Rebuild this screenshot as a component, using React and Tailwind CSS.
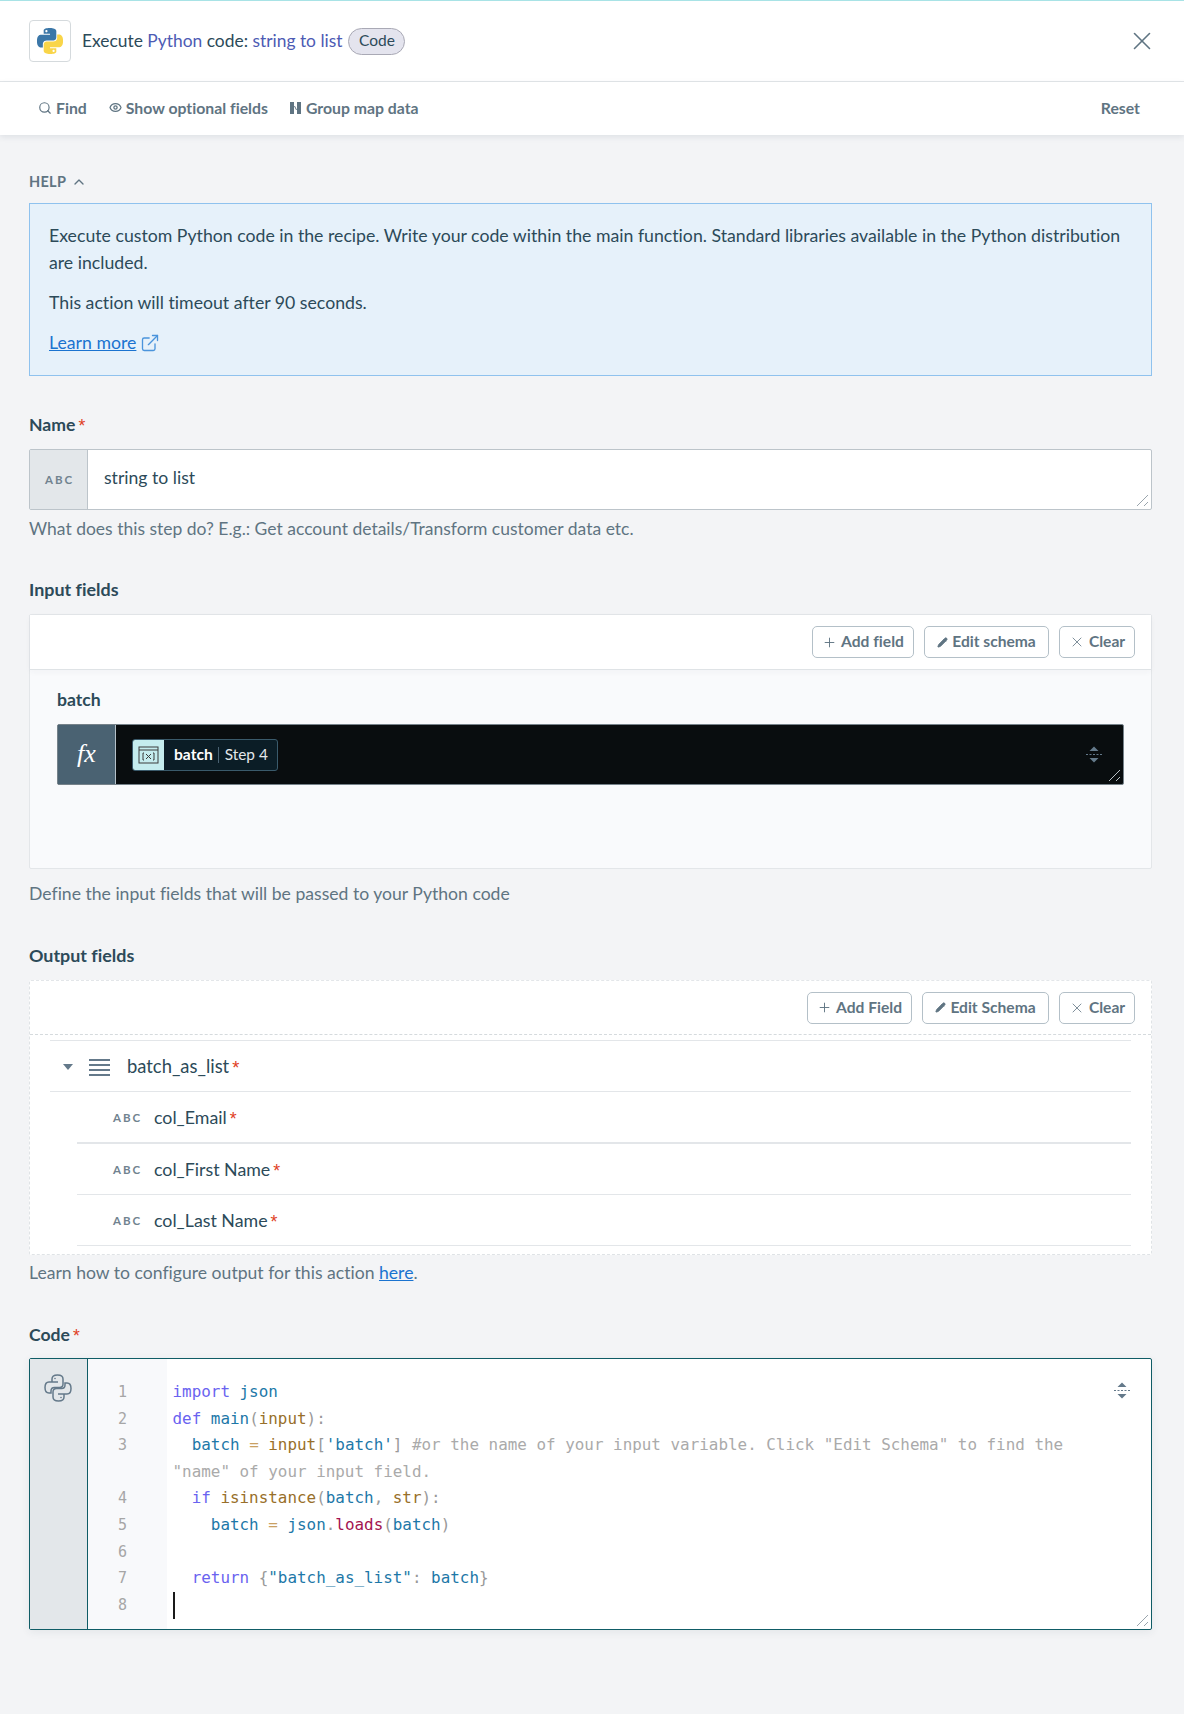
import { Search, Eye, ChevronUp, Plus, X, Pencil, ExternalLink } from 'lucide-react';

const blue = "M14.25.18l.9.2.73.26.59.3.45.32.34.34.25.34.16.33.1.3.04.26.02.2-.01.13V8.5l-.05.63-.13.55-.21.46-.26.38-.3.31-.33.25-.35.19-.35.14-.33.1-.3.07-.26.04-.21.02H8.77l-.69.05-.59.14-.5.22-.41.27-.33.32-.27.35-.2.36-.15.37-.1.35-.07.32-.04.27-.02.21v3.06H3.17l-.21-.03-.28-.07-.32-.12-.35-.18-.36-.26-.36-.36-.35-.46-.32-.59-.28-.73-.21-.88-.14-1.05-.05-1.23.06-1.22.16-1.04.24-.87.32-.71.36-.57.4-.44.42-.33.42-.24.4-.16.36-.1.32-.05.24-.01h.16l.06.01h8.16v-.83H6.18l-.01-2.75-.02-.37.05-.34.11-.31.17-.28.25-.26.31-.23.38-.2.44-.18.51-.15.58-.12.64-.1.71-.06.77-.04.84-.02 1.27.05zm-6.3 1.98l-.23.33-.08.41.08.41.23.34.33.22.41.09.41-.09.33-.22.23-.34.08-.41-.08-.41-.23-.33-.33-.22-.41-.09-.41.09z";
const yellow = "M21.04 6.11l.28.06.32.12.35.18.36.27.36.35.35.47.32.59.28.73.21.88.14 1.04.05 1.23-.06 1.23-.16 1.04-.24.86-.32.71-.36.57-.4.45-.42.33-.42.24-.4.16-.36.09-.32.05-.24.02-.16-.01h-8.22v.82h5.84l.01 2.76.02.36-.05.34-.11.31-.17.29-.25.25-.31.24-.38.2-.44.17-.51.15-.58.13-.64.09-.71.07-.77.04-.84.01-1.27-.04-1.07-.14-.9-.2-.73-.25-.59-.3-.45-.33-.34-.34-.25-.34-.16-.33-.1-.3-.04-.25-.02-.2.01-.13v-5.34l.05-.64.13-.54.21-.46.26-.38.3-.32.33-.24.35-.2.35-.14.33-.1.3-.06.26-.04.21-.02.13-.01h5.84l.69-.05.59-.14.5-.21.41-.28.33-.32.27-.35.2-.36.15-.36.1-.35.07-.32.04-.28.02-.21V6.07h2.09l.14.01zm-6.47 14.25l-.23.33-.08.41.08.41.23.33.33.23.41.08.41-.08.33-.23.23-.33.08-.41-.08-.41-.23-.33-.33-.23-.41-.08-.41.08z";
const snake = "M8 8V5c0-2.5 2.5-4 5.5-4s5.5 1.5 5.5 4v5c0 2-1.5 3.5-3.5 3.5h-5C8.5 13.5 7 15 7 17v2H5c-2.5 0-4-2.5-4-5.5S2.5 8 5 8h9";

function Req() {
  return <span className="text-[#e0401e] font-['Liberation_Sans',sans-serif] font-normal ml-[3px] relative top-[1px]">*</span>;
}

function Resize({ color = "#9aa5ad" }) {
  return (
    <svg className="absolute right-[2px] bottom-[2px]" width="13" height="13" viewBox="0 0 13 13">
      <path d="M1 12 12 1M8 12l4-4" stroke={color} strokeWidth="1" fill="none" />
    </svg>
  );
}

function Expand() {
  return (
    <svg width="16" height="17" viewBox="0 0 16 17">
      <path d="M8 .5l4.5 4.5h-9zM8 16.5l-4.5-4.5h9z" fill="#64798a" />
      <path d="M0 8.5h16" stroke="#64798a" strokeWidth="1.2" strokeDasharray="2 1.5" />
    </svg>
  );
}

function Btn({ icon, label, className }) {
  return (
    <button className={`h-[32px] flex items-center justify-center gap-[4px] rounded-[5px] border border-[#b4c0c8] bg-white text-[15.6px] font-bold text-[#5f7482] ${className}`}>
      {icon}
      {label}
    </button>
  );
}

function Abc({ className }) {
  return <span className={`text-[11.5px] font-bold tracking-[2px] text-[#71838f] ${className}`}>ABC</span>;
}

function Row({ label, border, height }) {
  return (
    <div className={`ml-[27px] pt-[2px] flex items-center ${height} ${border}`}>
      <Abc className="w-[42px] ml-[36px] shrink-0" />
      <span className="ml-[-1px] text-[17.8px] text-[#2c4a59]">{label}<Req /></span>
    </div>
  );
}

const Kw = ({ children }) => <span className="text-[#6a63f0]">{children}</span>;
const Id = ({ children }) => <span className="text-[#1d78a8]">{children}</span>;
const Bi = ({ children }) => <span className="text-[#986f2a]">{children}</span>;
const Eq = ({ children }) => <span className="text-[#c9a063]">{children}</span>;

export default function App() {
  return (
    <div className="w-[1184px] h-[1714px] bg-[#f3f4f6] text-[#2c4a59] [font-variant-ligatures:none] font-['Lato','Noto_Sans',sans-serif]">
      <div className="h-[1px] bg-[#a8e3e6]" />
      <header className="h-[81px] bg-white border-b border-[#e3e6e9] flex items-center pl-[29px] pr-[27px]">
        <div className="w-[42px] h-[42px] rounded-[4px] border border-[#d5dadd] flex items-center justify-center">
          <svg width="26" height="28" viewBox="0 0 24 24">
            <path d={blue} fill="#3b77a8" />
            <path d={yellow} fill="#f9d549" />
          </svg>
        </div>
        <div className="ml-[11px] text-[17.4px] text-[#2c4a59]">
          Execute <span className="text-[#4d5bb4]">Python</span> code: <span className="text-[#4d5bb4]">string to list</span>
        </div>
        <span className="ml-[6px] h-[27px] w-[57px] flex items-center justify-center rounded-full border border-[#a9a9b5] bg-[#e4e4ee] text-[15.5px]">Code</span>
        <X className="ml-auto text-[#5f7482]" size={30} strokeWidth={1.3} />
      </header>

      <div className="h-[53px] pb-[2px] bg-white shadow-[0_2px_6px_rgba(40,60,80,0.1)] flex items-center pl-[38px] pr-[44px] text-[15.8px] font-bold text-[#5f7482]">
        <Search size={14} strokeWidth={2} />
        <span className="ml-[4px]">Find</span>
        <Eye className="ml-[22px]" size={13} strokeWidth={2.4} />
        <span className="ml-[4px]">Show optional fields</span>
        <svg className="ml-[22px]" width="11" height="12" viewBox="0 0 11 12">
          <path d="M0 0h4v12H0zM7 0h4v12H7z" fill="#5f7482" />
          <path d="M4.5 4l2 4" stroke="#5f7482" strokeWidth="1" />
        </svg>
        <span className="ml-[5px]">Group map data</span>
        <span className="ml-auto">Reset</span>
      </div>

      <main className="px-[29px]">
        <div className="pt-[26px] h-[68px] flex items-center text-[14.5px] font-bold text-[#5f7482] tracking-[0.3px]">
          HELP <ChevronUp className="ml-[5px]" size={16} strokeWidth={2} />
        </div>
        <div className="h-[173px] w-[1123px] bg-[#e6f1fa] border border-[#8fc2ee] pl-[19px] pr-[20px] pt-[18px] text-[17.7px] leading-[27px] text-[#2c4a59]">
          <p>Execute custom Python code in the recipe. Write your code within the main function. Standard libraries available in the Python distribution are included.</p>
          <p className="mt-[13px]">This action will timeout after 90 seconds.</p>
          <p className="mt-[13px] flex items-center gap-[4px] text-[#1a73d0]">
            <span className="underline">Learn more</span>
            <ExternalLink size={20} strokeWidth={1.6} className="text-[#4a94dc]" />
          </p>
        </div>

        <label className="block mt-[35px] h-[27px] text-[17.6px] font-bold leading-[27px]">Name<Req /></label>
        <div className="relative mt-[11px] h-[61px] w-[1123px] flex bg-white border border-[#bcc4ca] rounded-[2px]">
          <div className="w-[58px] pl-[2px] bg-[#e3e7ea] border-r border-[#bcc4ca] flex items-center justify-center">
            <Abc />
          </div>
          <div className="pl-[16px] flex items-center text-[17.6px] pb-[3px]">string to list</div>
          <Resize />
        </div>
        <p className="mt-[5px] h-[27px] text-[17.5px] leading-[27px] text-[#5f7482]">What does this step do? E.g.: Get account details/Transform customer data etc.</p>

        <label className="block mt-[34px] h-[27px] text-[17.9px] font-bold leading-[27px]">Input fields</label>
        <div className="mt-[11px] h-[255px] w-[1123px] rounded-[2px] border border-[#e3e6e9] bg-[#f9fafc]">
          <div className="h-[55px] bg-white border-b border-[#dfe3e6] shadow-[0_2px_6px_rgba(40,60,80,0.04)] flex items-center justify-end gap-[10px] pr-[16px]">
            <Btn className="w-[102px]" icon={<Plus size={15} strokeWidth={1.5} />} label="Add field" />
            <Btn className="w-[125px]" icon={<Pencil size={11} strokeWidth={2} fill="#5f7482" />} label="Edit schema" />
            <Btn className="w-[76px]" icon={<X size={16} strokeWidth={1.2} />} label="Clear" />
          </div>
          <div className="pl-[27px] pr-[27px]">
            <div className="mt-[16px] h-[27px] text-[17.6px] font-bold leading-[27px]">batch</div>
            <div className="relative mt-[11px] h-[61px] flex border border-[#76828a] rounded-[2px] bg-[#090d0f]">
              <div className="w-[58px] bg-[#4a6272] border-r border-[#b4c0c8] flex items-center justify-center text-white font-['Liberation_Serif',serif] italic text-[26px] pb-[3px]">
                fx
              </div>
              <div className="ml-[16px] self-center h-[32px] w-[146px] flex items-center rounded-[3px] border border-[#3a5a6b] bg-[#0b1d26] overflow-hidden">
                <div className="w-[31px] h-full bg-[#c5ecee] flex items-center justify-center">
                  <svg width="21" height="18" viewBox="0 0 21 18" fill="none" stroke="#3d3d3d">
                    <rect x="1" y="1" width="19" height="16" strokeWidth="1" />
                    <path d="M1 4h19" strokeWidth="1" />
                    <path d="M6 7H5v7h1M15 7h1v7h-1M8 13l5-5M8 8l5 5" strokeWidth="1" />
                  </svg>
                </div>
                <span className="ml-[10px] text-[15.6px] font-bold text-white">batch</span>
                <span className="ml-[5px] h-[16px] w-[1px] bg-[#4a6272]" />
                <span className="ml-[6px] text-[15.4px] text-[#e3e7ea]">Step 4</span>
              </div>
              <div className="absolute right-[21px] top-[21px]"><Expand /></div>
              <Resize color="#b9c0c5" />
            </div>
          </div>
        </div>
        <p className="mt-[11px] h-[27px] text-[17.6px] leading-[27px] text-[#5f7482]">Define the input fields that will be passed to your Python code</p>

        <label className="block mt-[35px] h-[27px] text-[17.9px] font-bold leading-[27px]">Output fields</label>
        <div className="mt-[11px] h-[275px] w-[1123px] rounded-[2px] border border-dashed border-[#dfe3e6] border-t-[#e3e6e9] bg-white">
          <div className="h-[54px] border-b border-dashed border-[#d5dadd] flex items-center justify-end gap-[10px] pr-[16px]">
            <Btn className="w-[105px]" icon={<Plus size={15} strokeWidth={1.5} />} label="Add Field" />
            <Btn className="w-[127px]" icon={<Pencil size={11} strokeWidth={2} fill="#5f7482" />} label="Edit Schema" />
            <Btn className="w-[76px]" icon={<X size={16} strokeWidth={1.2} />} label="Clear" />
          </div>
          <div className="pl-[20px] pr-[20px] pt-[5px]">
            <div className="h-[52px] pt-[2px] border-y border-[#e3e6e9] flex items-center">
              <svg className="ml-[13px]" width="10" height="6" viewBox="0 0 10 6"><path d="M0 0h10L5 6z" fill="#64798a" /></svg>
              <svg className="ml-[16px]" width="21" height="18" viewBox="0 0 21 18" fill="#64798a">
                <path d="M0 1h21v2H0zM0 6h21v2H0zM0 11h21v2H0zM0 16h21v2H0z" />
              </svg>
              <span className="ml-[17px] text-[18.4px]">batch_as_list<Req /></span>
            </div>
            <Row label="col_Email" height="h-[52px]" border="border-b-2 border-[#e3e6e9]" />
            <Row label="col_First Name" height="h-[51px]" border="border-b border-[#e3e6e9]" />
            <Row label="col_Last Name" height="h-[51px]" border="border-b border-[#e3e6e9]" />
          </div>
        </div>
        <p className="mt-[4px] h-[27px] text-[17.6px] leading-[27px] text-[#5f7482]">
          Learn how to configure output for this action <span className="text-[#1a73d0] underline">here</span>.
        </p>

        <label className="block mt-[35px] h-[27px] text-[17.6px] font-bold leading-[27px]">Code<Req /></label>
        <div className="relative mt-[10px] h-[272px] w-[1123px] flex bg-white border border-[#0f5c66] rounded-[2px] shadow-[0_2px_8px_rgba(40,60,80,0.08)]">
          <div className="w-[58px] bg-[#e3e7ea] border-r border-[#0f5c66] flex justify-center pt-[15px] pr-[2px]">
            <svg width="28" height="28" viewBox="0 0 28 28" fill="none" stroke="#64798a" strokeWidth="1.5">
              <path d={snake} />
              <path d={snake} transform="rotate(180 14 14)" />
              <circle cx="11" cy="4.5" r=".8" fill="#64798a" stroke="none" />
              <circle cx="17" cy="23.5" r=".8" fill="#64798a" stroke="none" />
            </svg>
          </div>
          <div className="w-[79px] bg-[#f8f9fb] pt-[20px] text-right pr-[40px] font-['DejaVu_Sans_Mono',monospace] text-[15px] leading-[26.6px] text-[#a6a6a6]">
            <div>1</div>
            <div>2</div>
            <div>3</div>
            <div>&nbsp;</div>
            <div>4</div>
            <div>5</div>
            <div>6</div>
            <div>7</div>
            <div>8</div>
          </div>
          <pre className="pl-[5.5px] pt-[20px] font-['DejaVu_Sans_Mono',monospace] text-[15.92px] leading-[26.6px] text-[#999]">
            <div><Kw>import</Kw> <Id>json</Id></div>
            <div><Kw>def</Kw> <Id>main</Id>(<Bi>input</Bi>):</div>
            <div>  <Id>batch</Id> <Eq>=</Eq> <Bi>input</Bi>[<Id>'batch'</Id>] <span className="text-[#aaa]">#or the name of your input variable. Click "Edit Schema" to find the</span></div>
            <div><span className="text-[#aaa]">"name" of your input field.</span></div>
            <div>  <Kw>if</Kw> <Bi>isinstance</Bi>(<Id>batch</Id>, <Bi>str</Bi>):</div>
            <div>    <Id>batch</Id> <Eq>=</Eq> <Id>json</Id>.<span className="text-[#a3134f]">loads</span>(<Id>batch</Id>)</div>
            <div>&nbsp;</div>
            <div>  <Kw>return</Kw> {"{"}<Id>"batch_as_list"</Id>: <Id>batch</Id>{"}"}</div>
            <div className="h-[26.6px]"><span className="inline-block w-[2px] h-[27px] bg-[#1a1a1a]" /></div>
          </pre>
          <div className="absolute right-[21px] top-[23px]"><Expand /></div>
          <Resize />
        </div>
      </main>
    </div>
  );
}
